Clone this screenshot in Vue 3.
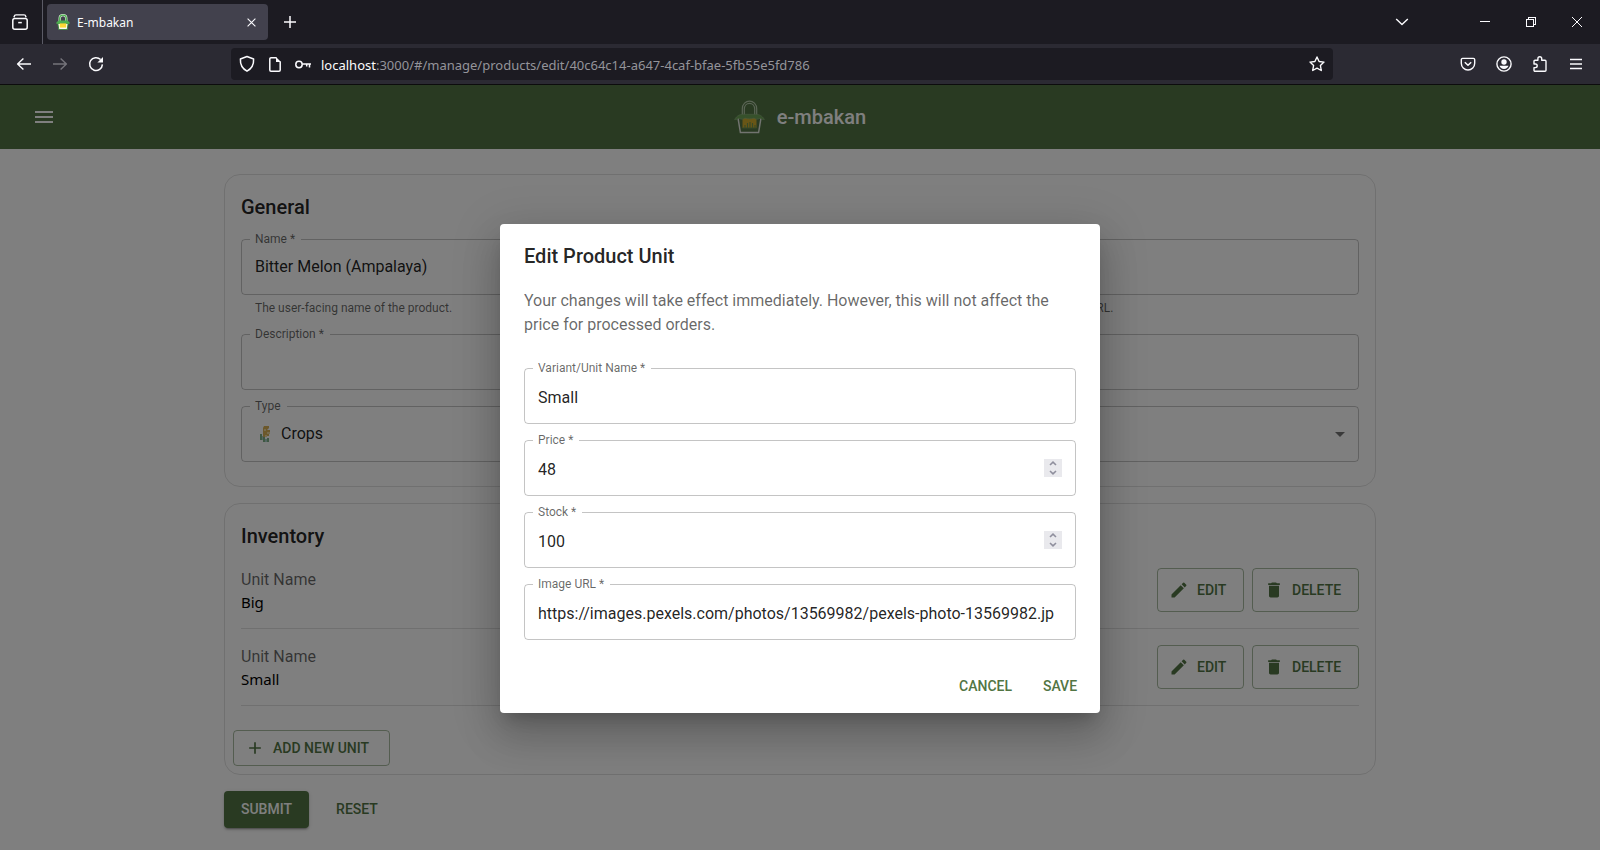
<script setup>
import { ref } from 'vue'

const name = ref('Bitter Melon (Ampalaya)')
const slug = ref('')
const description = ref('')
const type = ref('crops')

const units = [
  { id: 'big', name: 'Big' },
  { id: 'small', name: 'Small' },
]

const fields = ref([
  { id: 'unit-name', label: 'Variant/Unit Name *', kind: 'text', value: 'Small' },
  { id: 'unit-price', label: 'Price *', kind: 'number', value: 48 },
  { id: 'unit-stock', label: 'Stock *', kind: 'number', value: 100 },
  {
    id: 'unit-image',
    label: 'Image URL *',
    kind: 'text',
    value: 'https://images.pexels.com/photos/13569982/pexels-photo-13569982.jp',
  },
])
</script>

<template>
  <div class="window">
    <header class="chrome">
      <div class="tabbar">
        <button class="chrome-btn view-btn" aria-label="Firefox View">
          <svg width="16" height="16" viewBox="0 0 16 16" class="line">
            <path d="M3.2 .8h9.6M1.8 3.4 3 .9M14.2 3.4 13 .9" stroke-width="1.3" />
            <rect x=".8" y="4.4" width="14.4" height="10.8" rx="2" />
            <path d="M6.2 8.6h3.6" />
          </svg>
        </button>
        <div class="tab">
          <svg width="14" height="16" viewBox="0 0 30 34">
            <path d="M8 16V9c0-9 14-9 14 0v7" fill="none" stroke="#e8f5e4" stroke-width="5" />
            <path d="M8 16V9c0-9 14-9 14 0v7" fill="none" stroke="#4caf50" stroke-width="3" />
            <path d="M4 20h22l-2 13H6z" fill="#fff" stroke="#3f8a3c" stroke-width="2" />
            <path d="M0 20c2-4 5-6 8-6h14c3 0 6 2 8 6l-4 1H4z" fill="#4caf50" />
            <rect x="8" y="20" width="14" height="9" fill="#fdd835" />
          </svg>
          <span class="tab-title">E-mbakan</span>
          <button class="tab-close" aria-label="Close tab">
            <svg width="9" height="9" viewBox="0 0 9 9" class="line"><path d="m.6.6 7.8 7.8M8.4.6.6 8.4" stroke-width="1.1" /></svg>
          </button>
        </div>
        <button class="chrome-btn" aria-label="New tab">
          <svg width="12" height="12" viewBox="0 0 12 12" class="line"><path d="M6 0v12M0 6h12" /></svg>
        </button>
        <div class="grow"></div>
        <button class="chrome-btn list-btn" aria-label="List all tabs">
          <svg width="14" height="8" viewBox="0 0 14 8" class="line"><path d="m1.2 1 5.8 5.6L12.8 1" stroke-width="1.4" /></svg>
        </button>
        <button class="win-btn" aria-label="Minimize">
          <svg width="10" height="10" viewBox="0 0 10 10" class="line crisp"><path d="M0 4.5h10" stroke-width="1" /></svg>
        </button>
        <button class="win-btn" aria-label="Restore">
          <svg width="10" height="10" viewBox="0 0 10 10" class="line crisp"><path d="M.5 2.5h7v7h-7zM2.5 2.5v-2h7v7h-2" stroke-width="1" /></svg>
        </button>
        <button class="win-btn" aria-label="Close">
          <svg width="10" height="10" viewBox="0 0 10 10" class="line"><path d="m0 0 10 10M10 0 0 10" stroke-width="1" /></svg>
        </button>
      </div>

      <div class="navbar">
        <button class="chrome-btn" aria-label="Back">
          <svg width="16" height="16" viewBox="0 0 16 16" class="line"><path d="M15 8H1.6M7.4 2.4 1.6 8l5.8 5.6" stroke-width="1.4" /></svg>
        </button>
        <button class="chrome-btn dim" aria-label="Forward" disabled>
          <svg width="16" height="16" viewBox="0 0 16 16" class="line"><path d="M1 8h13.4M8.6 2.4 14.4 8l-5.8 5.6" stroke-width="1.4" /></svg>
        </button>
        <button class="chrome-btn" aria-label="Reload">
          <svg width="16" height="16" viewBox="0 0 16 16" class="line">
            <path d="M14.4 8.4A6.4 6.4 0 1 1 12.6 3.6" stroke-width="1.5" />
            <path d="M15 1v5.6H9.4z" fill="currentColor" stroke="none" />
          </svg>
        </button>
        <div class="urlbar">
          <svg width="16" height="18" viewBox="0 0 16 18" class="line">
            <path d="M8 1.5 14.6 4c.3 5-1.4 9.300-6.600 12.200C2.800 13.300 1.100 9 1.400 4z" stroke-width="1.5" />
          </svg>
          <svg width="12" height="15" viewBox="0 0 12 15" class="line">
            <path d="M7.500.8H2A1.200 1.200 0 0 0 .8 2v11A1.200 1.200 0 0 0 2 14.200h8a1.200 1.200 0 0 0 1.200-1.200V4.600" stroke-width="1.5" />
            <path d="M7 0v5h5z" fill="currentColor" stroke="none" />
          </svg>
          <svg width="16" height="9" viewBox="0 0 16 9" class="line">
            <circle cx="4" cy="4.5" r="3.2" stroke-width="1.5" />
            <path d="M7.200 4H16M11.700 4v2.600M14.500 4v3.400" stroke-width="1.5" />
          </svg>
          <div class="url"><span class="host">localhost</span>:3000/#/manage/products/edit/40c64c14-a647-4caf-bfae-5fb55e5fd786</div>
          <button class="star" aria-label="Bookmark this page">
            <svg width="16" height="16" viewBox="0 0 16 16" class="line">
              <path d="m8 1 2.100 4.500 4.900.6-3.600 3.400.9 5L8 12.100l-4.300 2.400.9-5L1 6.100l4.900-.6z" stroke-width="1.4" />
            </svg>
          </button>
        </div>
        <button class="chrome-btn" aria-label="Save to Pocket">
          <svg width="16" height="16" viewBox="0 0 16 16" class="line">
            <path d="M2.600 2.400h10.800a1.300 1.300 0 0 1 1.300 1.300v3.600a6.700 6.700 0 0 1-13.400 0V3.700a1.300 1.300 0 0 1 1.300-1.300z" stroke-width="1.4" />
            <path d="m4.800 6.200 3.200 3 3.200-3" stroke-width="1.5" />
          </svg>
        </button>
        <button class="chrome-btn" aria-label="Account">
          <svg width="16" height="16" viewBox="0 0 16 16" class="line">
            <circle cx="8" cy="8" r="7.1" stroke-width="1.4" />
            <circle cx="8" cy="6" r="2.7" fill="currentColor" stroke="none" />
            <path d="M3.500 9.800h9c-.6 2-2.300 3.200-4.500 3.200s-3.900-1.200-4.500-3.200z" fill="currentColor" stroke="none" />
          </svg>
        </button>
        <button class="chrome-btn" aria-label="Extensions">
          <svg width="16" height="16" viewBox="0 0 16 16" class="line">
            <path d="M5.900 4.300V2.600a1.900 1.900 0 0 1 3.800 0v1.700H13a1 1 0 0 1 1 1v9a1 1 0 0 1-1 1H3a1 1 0 0 1-1-1v-2.700h1.400a1.800 1.800 0 0 0 0-3.600H2V5.300a1 1 0 0 1 1-1z" stroke-width="1.4" />
          </svg>
        </button>
        <button class="chrome-btn" aria-label="Menu">
          <svg width="12" height="12" viewBox="0 0 12 12" class="line"><path d="M0 1.500h12M0 6h12M0 10.500h12" stroke-width="1.3" /></svg>
        </button>
      </div>
    </header>

    <div class="page">
      <div class="appbar">
        <button class="menu-btn" aria-label="Open menu">
          <svg width="24" height="24" viewBox="0 0 24 24" fill="currentColor"><path d="M3 18h18v-2H3v2zm0-5h18v-2H3v2zm0-7v2h18V6H3z" /></svg>
        </button>
        <div class="brand">
          <svg width="31" height="34" viewBox="0 0 31 34" fill="none">
            <path d="M8.300 15V9c0-10.500 14.400-10.500 14.400 0v6" stroke="#b4c8aa" stroke-width="1.2" />
            <path d="M10.300 15V9.300c0-8 10.400-8 10.400 0V15" stroke="#b4c8aa" stroke-width="1.2" />
            <path d="M4 18 6.400 32.500h18.200L27 18" stroke="#e4e8e0" stroke-width="1.5" />
            <path d="M8.500 18h14v10h-14z" fill="#d0ac2c" />
            <path d="M11 28v-3M13.500 28v-5M16 28v-6M18.500 28v-5M21 28v-3" stroke="#6c9250" stroke-width="1.1" />
            <path d="M8.500 28h14" stroke="#6c9250" stroke-width="1" />
            <path d="M.6 19.500C3 15.500 6 14.300 9 14.300h13c3 0 6 1.200 8.400 5.200-2 0-3-.4-4.400-1.200-2.400 1.400-4.600 1-6-.2-2.400 1-6.400 1-9 0-1.400 1.200-3.600 1.600-6 .2-1.400.8-2.400 1.200-4.400 1.200z" fill="#6ca257" stroke="#8fb27f" stroke-width=".6" />
          </svg>
          <span>e-mbakan</span>
        </div>
      </div>

      <main class="container">
        <section class="card">
          <div class="card-content last">
            <h2>General</h2>
            <div class="stack">
              <div class="two-cols">
                <div>
                  <div class="field">
                    <label for="p-name">Name *</label>
                    <input id="p-name" v-model="name" type="text" />
                  </div>
                  <p class="helper">The user-facing name of the product.</p>
                </div>
                <div>
                  <div class="field">
                    <label for="p-slug">Slug *</label>
                    <input id="p-slug" v-model="slug" type="text" />
                  </div>
                  <p class="helper">The unique name of the product that is used in its URL.</p>
                </div>
              </div>
              <div class="field">
                <label for="p-desc">Description *</label>
                <input id="p-desc" v-model="description" type="text" />
              </div>
              <div class="field select">
                <label for="p-type">Type</label>
                <svg class="crop-icon" width="12" height="16" viewBox="0 0 12 16">
                  <path d="M5 0h5v2L8 4h3v2L9 8h1v2H6v1H4V2z" fill="#d8b056" />
                  <path d="M5 3h2v2H5zM8 6h3v2H8zM6 9h2v2H6z" fill="#ecd79a" />
                  <path d="M1 8h2v6H1zM4 11h2v5H4zM8 12h2v4H8z" fill="#7fae86" />
                  <path d="M3 10h1v4H3zM6 13h2v3H6z" fill="#a5cfc4" />
                </svg>
                <select id="p-type" v-model="type">
                  <option value="crops">Crops</option>
                </select>
                <svg class="caret" width="24" height="24" viewBox="0 0 24 24" fill="currentColor"><path d="m7 10 5 5 5-5z" /></svg>
              </div>
            </div>
          </div>
        </section>

        <section class="card">
          <div class="card-content">
            <h2>Inventory</h2>
            <div v-for="unit in units" :key="unit.id" class="unit">
              <div class="unit-text">
                <div class="unit-label">Unit Name</div>
                <div class="unit-name">{{ unit.name }}</div>
              </div>
              <button class="btn outlined edit">
                <svg width="20" height="20" viewBox="0 0 24 24" fill="currentColor">
                  <path d="M3 17.250V21h3.750L17.810 9.940l-3.750-3.750L3 17.250zM20.710 7.040c.39-.39.39-1.020 0-1.410l-2.340-2.340a.9959.9959 0 0 0-1.410 0l-1.830 1.830 3.750 3.750 1.830-1.830z" />
                </svg>
                EDIT
              </button>
              <button class="btn outlined delete">
                <svg width="20" height="20" viewBox="0 0 24 24" fill="currentColor">
                  <path d="M6 19c0 1.100.9 2 2 2h8c1.100 0 2-.9 2-2V7H6v12zM19 4h-3.500l-1-1h-5l-1 1H5v2h14V4z" />
                </svg>
                DELETE
              </button>
            </div>
          </div>
          <div class="card-actions">
            <button class="btn outlined add">
              <svg width="20" height="20" viewBox="0 0 24 24" fill="currentColor"><path d="M19 13h-6v6h-2v-6H5v-2h6V5h2v6h6v2z" /></svg>
              ADD NEW UNIT
            </button>
          </div>
        </section>

        <div class="form-actions">
          <button class="btn contained">SUBMIT</button>
          <button class="btn text">RESET</button>
        </div>
      </main>

      <div class="backdrop">
        <form class="dialog" role="dialog" aria-modal="true" aria-labelledby="dialog-title" @submit.prevent>
          <h2 id="dialog-title">Edit Product Unit</h2>
          <div class="dialog-body">
            <p>Your changes will take effect immediately. However, this will not affect the price for processed orders.</p>
            <div class="stack">
              <div v-for="field in fields" :key="field.id" class="field">
                <label :for="field.id">{{ field.label }}</label>
                <input :id="field.id" v-model="field.value" :type="field.kind" />
                <div v-if="field.kind === 'number'" class="spinner">
                  <button type="button" aria-label="Increase" @click="field.value++">
                    <svg width="8" height="5" viewBox="0 0 8 5" fill="none" stroke="currentColor" stroke-width="1.6"><path d="M1 4l3-2.800L7 4" /></svg>
                  </button>
                  <button type="button" aria-label="Decrease" @click="field.value--">
                    <svg width="8" height="5" viewBox="0 0 8 5" fill="none" stroke="currentColor" stroke-width="1.6"><path d="M1 1l3 2.800L7 1" /></svg>
                  </button>
                </div>
              </div>
            </div>
          </div>
          <div class="dialog-actions">
            <button type="button" class="btn text">CANCEL</button>
            <button type="submit" class="btn text">SAVE</button>
          </div>
        </form>
      </div>
    </div>
  </div>
</template>

<style>
html,
body {
  margin: 0;
  background: #fff;
}
</style>

<style scoped>
.window {
  --green: #527544;
  min-height: 100vh;
  display: flex;
  flex-direction: column;
  font-family: Roboto, 'Liberation Sans', sans-serif;
  font-size: 16px;
  line-height: 24px;
  color: rgba(0, 0, 0, 0.87);
}
*,
*::before {
  box-sizing: border-box;
}
button,
input,
select {
  font: inherit;
  color: inherit;
  margin: 0;
  padding: 0;
  border: 0;
  background: none;
  outline: 0;
}
svg {
  display: block;
  flex: none;
}
h2,
p {
  margin: 0;
}
h2 {
  font-size: 20px;
  font-weight: 500;
  line-height: 32px;
}

/* Browser chrome */
.chrome {
  background: #1c1b22;
  color: #fbfbfe;
  border-bottom: 1px solid #0c0c0d;
  font-family: 'Noto Sans', 'Open Sans', sans-serif;
}
.line {
  fill: none;
  stroke: currentColor;
  stroke-width: 1.5;
  stroke-linejoin: round;
}
.crisp {
  shape-rendering: crispEdges;
}
.tabbar {
  display: flex;
  align-items: center;
  height: 44px;
}
.chrome-btn,
.win-btn {
  display: flex;
  align-items: center;
  justify-content: center;
  width: 36px;
  height: 36px;
}
.view-btn {
  width: 43px;
  height: 44px;
  padding-right: 2px;
  border-right: 1px solid #5b5b66;
}
.tab {
  display: flex;
  align-items: center;
  width: 221px;
  height: 36px;
  margin: 0 4px;
  padding: 0 12px 0 9px;
  border-radius: 4px;
  background: #42414d;
}
.tab-title {
  flex: 1;
  margin-left: 7px;
  padding-top: 2px;
  font-size: 12px;
}
.grow {
  flex: 1;
}
.list-btn {
  margin-right: 42px;
}
.win-btn {
  width: 46px;
}
.navbar {
  display: flex;
  align-items: center;
  height: 40px;
  padding: 0 6px;
  background: #2b2a33;
}
.dim {
  color: #75747b;
}
.urlbar {
  flex: 1;
  display: flex;
  align-items: center;
  height: 32px;
  min-width: 0;
  margin: 0 117px;
  padding: 0 8px;
  gap: 14px;
  border-radius: 4px;
  background: #1c1b22;
}
.url {
  flex: 1;
  min-width: 0;
  overflow: hidden;
  white-space: nowrap;
  font-size: 13px;
  margin-left: -4px;
  padding-top: 2px;
  color: #94949a;
}
.host {
  color: #fbfbfe;
}

/* Application */
.page {
  position: relative;
  flex: 1;
}
.appbar {
  display: grid;
  grid-template-columns: 1fr auto 1fr;
  align-items: center;
  height: 64px;
  padding: 0 24px;
  background: var(--green);
  color: #fff;
}
.menu-btn {
  width: 40px;
  padding: 8px;
}
.brand {
  display: flex;
  align-items: center;
  gap: 12px;
  font-size: 20px;
  font-weight: 500;
}
.container {
  display: flex;
  flex-direction: column;
  gap: 16px;
  max-width: 1200px;
  margin: 0 auto;
  padding: 25px 24px 22px;
}
.card {
  border: 1px solid rgba(0, 0, 0, 0.12);
  border-radius: 16px;
}
.card-content {
  padding: 16px;
}
.card-content.last {
  padding-bottom: 24px;
}
.stack {
  display: flex;
  flex-direction: column;
  gap: 16px;
}
.card .stack {
  margin-top: 16px;
}
.two-cols {
  display: grid;
  grid-template-columns: 1fr 1fr;
  gap: 16px;
}
.field {
  position: relative;
  display: flex;
  align-items: center;
  height: 56px;
  padding: 0 13px;
  border: 1px solid rgba(0, 0, 0, 0.23);
  border-radius: 4px;
}
.field label {
  position: absolute;
  top: -9px;
  left: 8px;
  padding: 0 6px 0 5px;
  background: #fff;
  font-size: 12px;
  line-height: 16px;
  color: rgba(0, 0, 0, 0.6);
}
.field input,
.field select {
  flex: 1;
  min-width: 0;
  height: 24px;
}
.field input[type='number'] {
  appearance: textfield;
}
.field input::-webkit-inner-spin-button {
  appearance: none;
}
.field select {
  appearance: none;
  align-self: stretch;
  height: auto;
  margin-left: 10px;
}
.crop-icon {
  margin-left: 4px;
}
.caret {
  color: rgba(0, 0, 0, 0.54);
  margin-right: -7px;
  pointer-events: none;
}
.helper {
  margin: 3px 14px 0;
  font-size: 12px;
  line-height: 20px;
  color: rgba(0, 0, 0, 0.6);
}
.unit {
  display: flex;
  gap: 8px;
  padding: 16px 0;
  border-bottom: 1px solid rgba(0, 0, 0, 0.12);
}
.unit-text {
  flex: 1;
}
.unit-label {
  color: rgba(0, 0, 0, 0.6);
}
.unit-name {
  font-family: 'Noto Sans', 'Open Sans', sans-serif;
  font-size: 15px;
  line-height: 20px;
  color: #000;
}
.btn {
  display: flex;
  align-items: center;
  justify-content: center;
  min-width: 64px;
  padding: 6px 8px;
  border-radius: 4px;
  font-size: 14px;
  font-weight: 500;
  line-height: 25px;
  color: var(--green);
}
.btn svg {
  margin: 0 8px 0 -4px;
}
.btn.outlined {
  justify-content: flex-start;
  padding: 5px 15px;
  line-height: 24px;
  border: 1px solid rgba(82, 117, 68, 0.5);
}
.edit {
  min-width: 87px;
}
.delete {
  min-width: 107px;
}
.add {
  min-width: 157px;
}
.btn.contained {
  min-width: 85px;
  padding: 6px 16px;
  background: var(--green);
  color: #fff;
  box-shadow: 0 3px 1px -2px rgba(0, 0, 0, 0.2), 0 2px 2px rgba(0, 0, 0, 0.14), 0 1px 5px rgba(0, 0, 0, 0.12);
}
.card-actions {
  display: flex;
  padding: 8px;
}
.form-actions {
  display: flex;
  gap: 16px;
}

/* Dialog */
.backdrop {
  position: absolute;
  inset: 0;
  display: flex;
  align-items: center;
  justify-content: center;
  padding: 34px 32px 32px;
  background: rgba(0, 0, 0, 0.5);
}
.dialog {
  width: 100%;
  max-width: 600px;
  border-radius: 4px;
  background: #fff;
  box-shadow: 0 11px 15px -7px rgba(0, 0, 0, 0.2), 0 24px 38px 3px rgba(0, 0, 0, 0.14), 0 9px 46px 8px rgba(0, 0, 0, 0.12);
}
.dialog h2 {
  padding: 16px 24px;
}
.dialog-body {
  padding: 1px 24px 20px;
}
.dialog-body p {
  margin-bottom: 31px;
  color: rgba(0, 0, 0, 0.6);
}
.dialog-body input {
  height: 26px;
  padding-top: 2px;
}
.dialog-actions {
  display: flex;
  justify-content: flex-end;
  gap: 8px;
  padding: 8px;
}
.spinner {
  display: flex;
  flex-direction: column;
  width: 18px;
  height: 18px;
  background: #e9e9ed;
  color: #8f8f9d;
}
.spinner button {
  flex: 1;
  display: flex;
  align-items: center;
  justify-content: center;
}
</style>
